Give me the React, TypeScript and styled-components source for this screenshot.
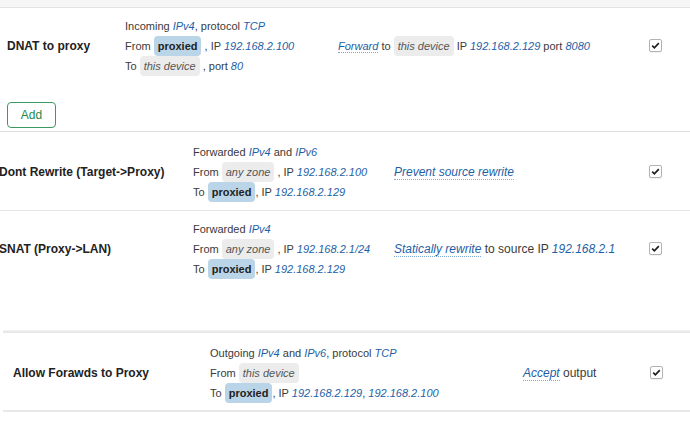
import React from "react";
import styled, { createGlobalStyle } from "styled-components";

const GlobalStyle = createGlobalStyle`
  html, body {
    margin: 0;
    padding: 0;
    background: #fff;
    overflow: hidden;
  }
  body {
    font-family: "Liberation Sans", Arial, sans-serif;
    color: #3a3a3a;
  }
`;

const TopBand = styled.div`
  height: 7px;
  background: #f6f6f6;
  border-bottom: 1px solid #e3e3e3;
`;

const Section = styled.section<{ $shift: number; $pad: number; $gap?: number; $thick?: boolean }>`
  margin-left: ${(p) => p.$shift}px;
  margin-top: ${(p) => p.$gap ?? 0}px;
  padding-left: ${(p) => p.$pad}px;
  border-top: ${(p) => (p.$thick ? "2px solid #e8e8e8" : "none")};
  box-shadow: ${(p) => (p.$thick ? "0 -1px 0 #f3f3f3" : "none")};
  border-bottom: ${(p) => (p.$thick ? "2px solid #e8e8e8" : "1px solid #dedede")};
`;

const Row = styled.div<{ $cols: string; $pt: number; $pb: number; $line?: boolean }>`
  display: grid;
  grid-template-columns: ${(p) => p.$cols};
  align-items: center;
  padding: ${(p) => p.$pt}px 0 ${(p) => p.$pb}px;
  border-bottom: ${(p) => (p.$line ? "1px solid #e6e6e6" : "none")};
`;

const Title = styled.div`
  font-size: 12px;
  font-weight: bold;
  color: #222;
  white-space: nowrap;
`;

const Desc = styled.div`
  font-size: 11px;
  line-height: 20px;
  white-space: nowrap;
`;

const Line = styled.div`
  height: 20px;
`;

const Action = styled.div<{ $size: number }>`
  font-size: ${(p) => p.$size}px;
  line-height: 20px;
  white-space: nowrap;
`;

const Badge = styled.span<{ $kind: "zone" | "device" }>`
  display: inline-block;
  padding: 0 4px;
  line-height: 20px;
  border-radius: 4px;
  background: ${(p) => (p.$kind === "zone" ? "#bad5e7" : "#ececec")};
  color: ${(p) => (p.$kind === "zone" ? "#222" : "#555")};
  font-weight: ${(p) => (p.$kind === "zone" ? "bold" : "normal")};
  font-style: ${(p) => (p.$kind === "zone" ? "normal" : "italic")};
`;

const Val = styled.var`
  color: #1d5fa6;
  font-style: italic;
`;

const Verb = styled.var`
  color: #1d5fa6;
  font-style: italic;
  border-bottom: 1px dotted #7ea9d4;
`;

const Check = styled.span`
  display: inline-flex;
  align-items: center;
  justify-content: center;
  box-sizing: border-box;
  width: 13px;
  height: 13px;
  border: 1px solid #b3b3b3;
  border-radius: 2px;
  background: #fff;
  box-shadow: 0 1px 1px rgba(0, 0, 0, 0.06);
`;

const AddBar = styled.div`
  padding: 26px 0 3px;
`;

const AddButton = styled.button`
  box-sizing: border-box;
  width: 49px;
  height: 26px;
  border: 1px solid #3a9a62;
  border-radius: 4px;
  background: #fff;
  color: #23894c;
  font-family: "Liberation Sans", Arial, sans-serif;
  font-size: 12px;
  padding: 0;
  cursor: pointer;
`;

function Tick() {
  return (
    <Check>
      <svg width="11" height="11" viewBox="0 0 11 11">
        <path d="M2.2 5.6 L4.4 7.8 L8.8 3.2" fill="none" stroke="#1e1e1e" strokeWidth="1.7" />
      </svg>
    </Check>
  );
}

const cols1 = "118px 213px 311px auto";
const cols2 = "194px 201px 255px auto";
const cols3 = "197px 313px 127px auto";

export default function App() {
  return (
    <>
      <GlobalStyle />
      <TopBand />

      <Section $shift={0} $pad={7}>
        <Row $cols={cols1} $pt={8} $pb={0}>
          <Title>DNAT to proxy</Title>
          <Desc>
            <Line>
              Incoming <Val>IPv4</Val>, protocol <Val>TCP</Val>
            </Line>
            <Line>
              From <Badge $kind="zone">proxied</Badge> , IP <Val>192.168.2.100</Val>
            </Line>
            <Line>
              To <Badge $kind="device">this device</Badge> , port <Val>80</Val>
            </Line>
          </Desc>
          <Action $size={11}>
            <Verb>Forward</Verb> to <Badge $kind="device">this device</Badge> IP{" "}
            <Val>192.168.2.129</Val> port <Val>8080</Val>
          </Action>
          <div>
            <Tick />
          </div>
        </Row>
        <AddBar>
          <AddButton>Add</AddButton>
        </AddBar>
      </Section>

      <Section $shift={-1} $pad={0} style={{ borderBottom: "none" }}>
        <Row $cols={cols2} $pt={10} $pb={8} $line>
          <Title>Dont Rewrite (Target-&gt;Proxy)</Title>
          <Desc>
            <Line>
              Forwarded <Val>IPv4</Val> and <Val>IPv6</Val>
            </Line>
            <Line>
              From <Badge $kind="device">any zone</Badge> , IP <Val>192.168.2.100</Val>
            </Line>
            <Line>
              To <Badge $kind="zone">proxied</Badge>, IP <Val>192.168.2.129</Val>
            </Line>
          </Desc>
          <Action $size={12}>
            <Verb>Prevent source rewrite</Verb>
          </Action>
          <div>
            <Tick />
          </div>
        </Row>
        <Row $cols={cols2} $pt={8} $pb={9}>
          <Title>SNAT (Proxy-&gt;LAN)</Title>
          <Desc>
            <Line>
              Forwarded <Val>IPv4</Val>
            </Line>
            <Line>
              From <Badge $kind="device">any zone</Badge> , IP <Val>192.168.2.1/24</Val>
            </Line>
            <Line>
              To <Badge $kind="zone">proxied</Badge>, IP <Val>192.168.2.129</Val>
            </Line>
          </Desc>
          <Action $size={12}>
            <Verb>Statically rewrite</Verb> to source IP <Val>192.168.2.1</Val>
          </Action>
          <div>
            <Tick />
          </div>
        </Row>
      </Section>

      <Section $shift={3} $pad={10} $gap={43} $thick>
        <Row $cols={cols3} $pt={10} $pb={7}>
          <Title>Allow Forawds to Proxy</Title>
          <Desc>
            <Line>
              Outgoing <Val>IPv4</Val> and <Val>IPv6</Val>, protocol <Val>TCP</Val>
            </Line>
            <Line>
              From <Badge $kind="device">this device</Badge>
            </Line>
            <Line>
              To <Badge $kind="zone">proxied</Badge>, IP <Val>192.168.2.129</Val>,{" "}
              <Val>192.168.2.100</Val>
            </Line>
          </Desc>
          <Action $size={12}>
            <Verb>Accept</Verb> output
          </Action>
          <div>
            <Tick />
          </div>
        </Row>
      </Section>
    </>
  );
}
